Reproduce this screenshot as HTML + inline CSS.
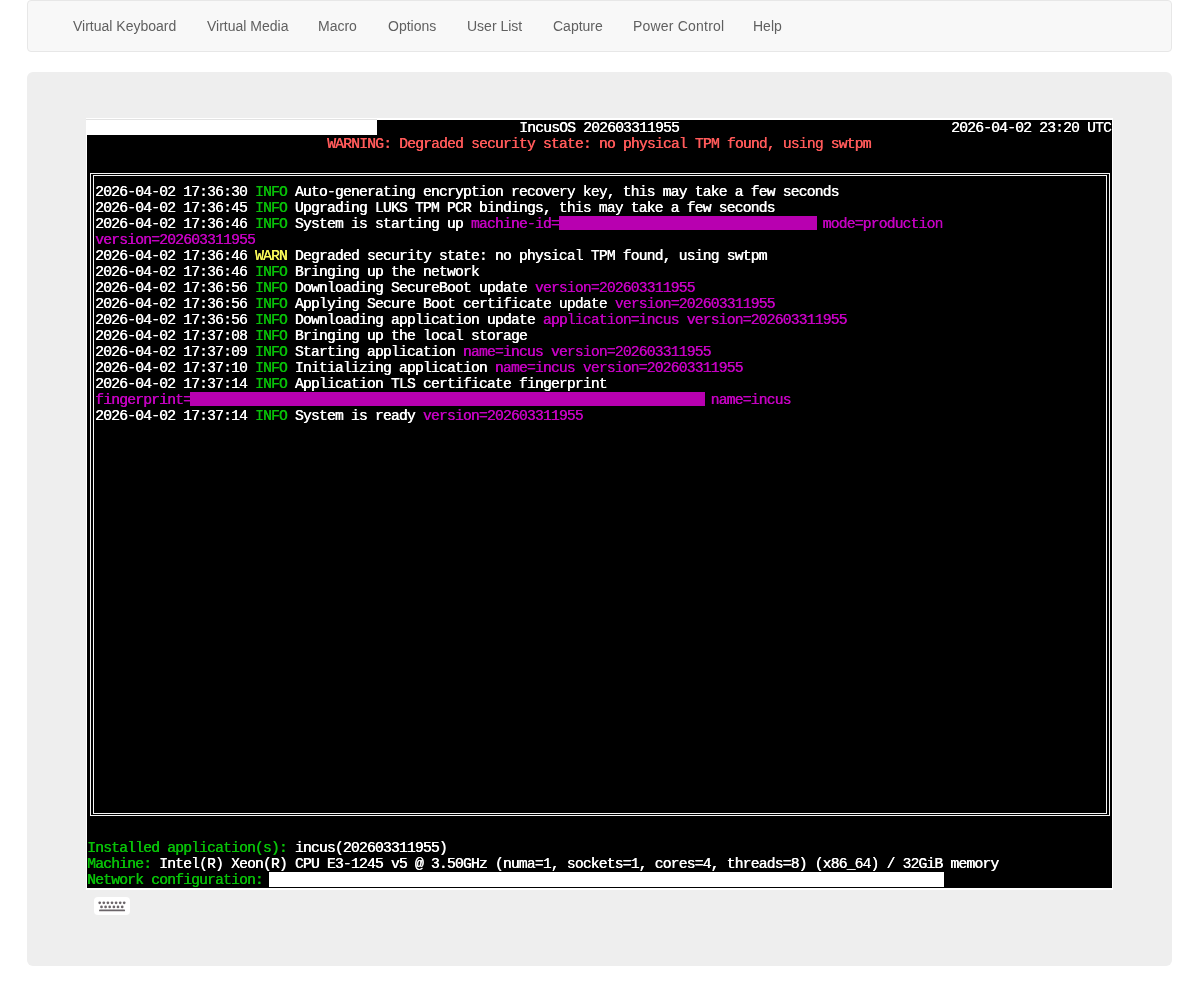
<!DOCTYPE html>
<html><head><meta charset="utf-8">
<style>
html,body{margin:0;padding:0;background:#fff;width:1200px;height:986px;overflow:hidden;position:relative}
*{box-sizing:border-box}
#nav{position:absolute;left:27px;top:0;width:1145px;height:52px;background:#f8f8f8;border:1px solid #e7e7e7;border-radius:4px}
.ni{position:absolute;top:16.2px;font:14px/20px "Liberation Sans",sans-serif;color:#606060;white-space:nowrap;will-change:transform}
#panel{position:absolute;left:27px;top:72px;width:1145px;height:894px;background:#eee;border-radius:6px}
#tw{position:absolute;left:86px;top:118px;width:1027px;height:772px;background:#fff}
#term{position:absolute;left:87px;top:120px;width:1025px;height:768px;background:#000;overflow:hidden}
.r{position:absolute;left:0;height:16px;font:14.7px/16px "Liberation Mono",monospace;text-shadow:0.45px 0 0 currentColor;will-change:transform;letter-spacing:-0.82px;white-space:pre;color:#fff}
.g{color:#08c008}.y{color:#f8f858}.m{color:#c400c0}.red{color:#ff5a5a}
.blk{position:absolute;background:#b800b0}
.ln{position:absolute;background:#f4f4f4}
#kb{position:absolute;left:94px;top:897px;width:36px;height:18px;background:#fff;border-radius:4px}
.dot{position:absolute;width:3px;height:3px;background:#6b666a;border-radius:1px}
</style></head><body>
<div id="nav">
</div>
<div class="ni" style="left:73px">Virtual Keyboard</div>
<div class="ni" style="left:207px">Virtual Media</div>
<div class="ni" style="left:317.5px">Macro</div>
<div class="ni" style="left:388px">Options</div>
<div class="ni" style="left:467px">User List</div>
<div class="ni" style="left:552.5px">Capture</div>
<div class="ni" style="left:632.5px;letter-spacing:0.2px">Power Control</div>
<div class="ni" style="left:752.5px">Help</div>

<div id="panel"></div>
<div id="tw"></div>
<div id="term">
<div class="r" style="top:0px;left:432px">IncusOS 202603311955</div>
<div class="r" style="top:0px;left:864px">2026-04-02 23:20 UTC</div>
<div class="r red" style="top:16px;left:240px">WARNING: Degraded security state: no physical TPM found, using swtpm</div>
<div class="r" style="top:64px;left:8px">2026-04-02 17:36:30 <span class="g">INFO</span> Auto-generating encryption recovery key, this may take a few seconds</div>
<div class="r" style="top:80px;left:8px">2026-04-02 17:36:45 <span class="g">INFO</span> Upgrading LUKS TPM PCR bindings, this may take a few seconds</div>
<div class="r" style="top:96px;left:8px">2026-04-02 17:36:46 <span class="g">INFO</span> System is starting up <span class="m">machine-id=                                 mode=production</span></div>
<div class="r m" style="top:112px;left:8px">version=202603311955</div>
<div class="r" style="top:128px;left:8px">2026-04-02 17:36:46 <span class="y">WARN</span> Degraded security state: no physical TPM found, using swtpm</div>
<div class="r" style="top:144px;left:8px">2026-04-02 17:36:46 <span class="g">INFO</span> Bringing up the network</div>
<div class="r" style="top:160px;left:8px">2026-04-02 17:36:56 <span class="g">INFO</span> Downloading SecureBoot update <span class="m">version=202603311955</span></div>
<div class="r" style="top:176px;left:8px">2026-04-02 17:36:56 <span class="g">INFO</span> Applying Secure Boot certificate update <span class="m">version=202603311955</span></div>
<div class="r" style="top:192px;left:8px">2026-04-02 17:36:56 <span class="g">INFO</span> Downloading application update <span class="m">application=incus version=202603311955</span></div>
<div class="r" style="top:208px;left:8px">2026-04-02 17:37:08 <span class="g">INFO</span> Bringing up the local storage</div>
<div class="r" style="top:224px;left:8px">2026-04-02 17:37:09 <span class="g">INFO</span> Starting application <span class="m">name=incus version=202603311955</span></div>
<div class="r" style="top:240px;left:8px">2026-04-02 17:37:10 <span class="g">INFO</span> Initializing application <span class="m">name=incus version=202603311955</span></div>
<div class="r" style="top:256px;left:8px">2026-04-02 17:37:14 <span class="g">INFO</span> Application TLS certificate fingerprint</div>
<div class="r m" style="top:272px;left:8px">fingerprint=                                                                 name=incus</div>
<div class="r" style="top:288px;left:8px">2026-04-02 17:37:14 <span class="g">INFO</span> System is ready <span class="m">version=202603311955</span></div>

<div class="blk" style="left:472px;top:96px;width:258px;height:14px"></div>
<div class="blk" style="left:103px;top:272px;width:515px;height:14px"></div>

<div class="ln" style="left:3px;top:53px;width:1020px;height:1px"></div>
<div class="ln" style="left:6px;top:55px;width:1014px;height:1px"></div>
<div class="ln" style="left:3px;top:695px;width:1020px;height:1px"></div>
<div class="ln" style="left:6px;top:693px;width:1014px;height:1px"></div>
<div class="ln" style="left:3px;top:53px;width:1px;height:643px"></div>
<div class="ln" style="left:6px;top:55px;width:1px;height:639px"></div>
<div class="ln" style="left:1022px;top:53px;width:1px;height:643px"></div>
<div class="ln" style="left:1019px;top:55px;width:1px;height:639px"></div>

<div class="r" style="top:720px"><span class="g">Installed application(s):</span> incus(202603311955)</div>
<div class="r" style="top:736px"><span class="g">Machine:</span> Intel(R) Xeon(R) CPU E3-1245 v5 @ 3.50GHz (numa=1, sockets=1, cores=4, threads=8) (x86_64) / 32GiB memory</div>
<div class="r g" style="top:752px">Network configuration: </div>
<div style="position:absolute;left:182px;top:752px;width:675px;height:15px;background:#fff"></div>
</div>
<div style="position:absolute;left:86px;top:118px;width:291px;height:17px;background:#fff"></div>
<div style="position:absolute;left:86px;top:119px;width:291px;height:1px;background:#e2e2e2"></div>

<div id="kb"></div>
<svg style="position:absolute;left:85px;top:890px" width="55" height="35" fill="#6b6569"><circle cx="14.7" cy="12.8" r="1.35"/><circle cx="18.8" cy="12.8" r="1.35"/><circle cx="22.9" cy="12.8" r="1.35"/><circle cx="27.0" cy="12.8" r="1.35"/><circle cx="31.1" cy="12.8" r="1.35"/><circle cx="35.2" cy="12.8" r="1.35"/><circle cx="39.2" cy="12.8" r="1.35"/><circle cx="16.5" cy="16.9" r="1.35"/><circle cx="20.6" cy="16.9" r="1.35"/><circle cx="24.7" cy="16.9" r="1.35"/><circle cx="28.9" cy="16.9" r="1.35"/><circle cx="33.0" cy="16.9" r="1.35"/><circle cx="37.2" cy="16.9" r="1.35"/><rect x="14" y="19.5" width="26.1" height="1.8" rx="0.9"/></svg>
</body></html>
